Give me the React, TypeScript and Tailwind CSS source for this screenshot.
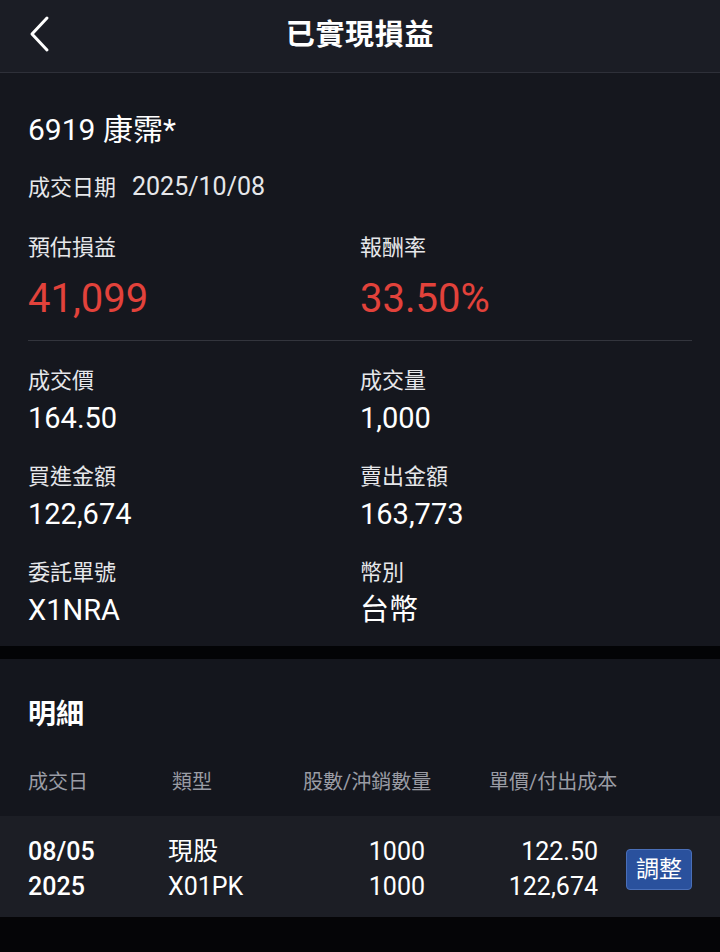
const font = { fontFamily: "Roboto, 'Noto Sans CJK TC', sans-serif" };

function Field({ label, value }: { label: string; value: string }) {
    return (
        <div>
            <div className="text-[22px] leading-[30px] text-[#e6e7ea]">{label}</div>
            <div className="mt-[5px] text-[29px] leading-[34px] text-white">{value}</div>
        </div>
    );
}

export default function App() {
    const fields = [
        ["成交價", "164.50", "成交量", "1,000"],
        ["買進金額", "122,674", "賣出金額", "163,773"],
        ["委託單號", "X1NRA", "幣別", "台幣"],
    ];

    return (
        <div className="w-[720px] h-[952px] bg-[#050507] text-white overflow-hidden" style={font}>
            {/* header */}
            <div className="relative h-[73px] bg-[#1b1d25] border-b border-[#2e3039] flex items-center justify-center">
                <svg className="absolute left-[26px] top-[14px]" width="28" height="40" viewBox="0 0 28 40" fill="none">
                    <polyline points="21,4 6,20 21,36" stroke="white" strokeWidth="3" strokeLinecap="round" strokeLinejoin="round" />
                </svg>
                <span className="text-[29px] font-bold tracking-wide">已實現損益</span>
            </div>

            {/* summary */}
            <div className="bg-[#15171e] px-[28px] pt-[40px] pb-[19px]">
                <div className="text-[30px] leading-[34px]">6919 康霈*</div>
                <div className="mt-[25px] text-[22px] leading-[30px] text-[#e6e7ea] flex items-baseline gap-[16px]">
                    <span>成交日期</span>
                    <span className="text-[25px]">2025/10/08</span>
                </div>

                <div className="mt-[30px] grid grid-cols-2">
                    <div>
                        <div className="text-[22px] leading-[30px] text-[#e6e7ea]">預估損益</div>
                        <div className="mt-[13px] text-[40px] leading-[46px] text-[#e2423b]">41,099</div>
                    </div>
                    <div>
                        <div className="text-[22px] leading-[30px] text-[#e6e7ea]">報酬率</div>
                        <div className="mt-[13px] text-[40px] leading-[46px] text-[#e2423b]">33.50%</div>
                    </div>
                </div>

                <div className="mt-[18px] h-px bg-[#33353d]" />

                <div className="mt-[25px] flex flex-col gap-[27px]">
                    {fields.map((f, i) => (
                        <div key={i} className="grid grid-cols-2">
                            <Field label={f[0]} value={f[1]} />
                            <Field label={f[2]} value={f[3]} />
                        </div>
                    ))}
                </div>
            </div>

            <div className="h-[13px] bg-[#030406]" />

            {/* detail */}
            <div className="bg-[#14161d]">
                <div className="px-[28px] pt-[39px] pb-[8px] text-[28px] leading-[34px] font-bold">明細</div>
                <div className="flex items-center h-[76px] pt-[8px] px-[28px] text-[20px] text-[#9a9ca4]">
                    <div className="w-[144px]">成交日</div>
                    <div className="w-[131px]">類型</div>
                    <div className="w-[186px]">股數/沖銷數量</div>
                    <div>單價/付出成本</div>
                </div>
                <div className="flex items-center h-[101px] pt-[5px] bg-[#1c1e25] px-[28px] text-[25px] leading-[35px]">
                    <div className="w-[140px] font-medium">
                        <div>08/05</div>
                        <div>2025</div>
                    </div>
                    <div className="w-[140px]">
                        <div>現股</div>
                        <div>X01PK</div>
                    </div>
                    <div className="w-[117px] text-right">
                        <div>1000</div>
                        <div>1000</div>
                    </div>
                    <div className="w-[173px] text-right">
                        <div>122.50</div>
                        <div>122,674</div>
                    </div>
                    <div className="ml-[28px] w-[66px] h-[41px] rounded-[4px] bg-[#2a519d] border border-[#4a6fb8] flex items-center justify-center text-[23px]">
                        調整
                    </div>
                </div>
            </div>
        </div>
    );
}
